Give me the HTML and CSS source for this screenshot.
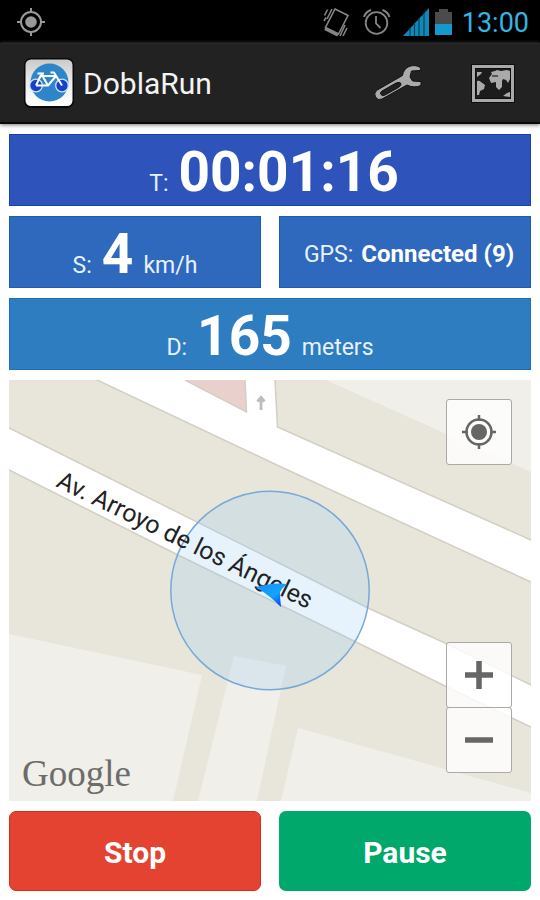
FILE: index.html
```html
<!DOCTYPE html>
<html lang="en">
<head>
<meta charset="utf-8">
<meta name="viewport" content="width=device-width, initial-scale=1">
<title>DoblaRun</title>
<link rel="stylesheet" href="styles.css">
</head>
<body>
<div class="status">
  <svg class="status-gps" width="28" height="28" viewBox="0 0 28 28" fill="none" stroke="#999" stroke-width="2"><circle cx="14" cy="14" r="10"/><circle cx="14" cy="14" r="5.8" fill="#999" stroke="none"/><path d="M14 0v5M14 23v5M0 14h5M23 14h5"/></svg>
  <div class="status-right">
    <svg class="vibrate" width="26" height="30" viewBox="323 7 26 30" fill="none" stroke="#858585" stroke-width="1.6"><path d="M335 9l13 6.500-9.500 18.500-13-6.500z"/><path d="M325 28.500l13 6.500" stroke-width="3.500"/><path d="M324.500 15.500l3-6M327 19l5-10M324 21l2-3.500M340 36l5-11M343 36l4-8"/></svg>
    <svg width="28" height="28" viewBox="363 8 28 28" fill="none" stroke="#858585" stroke-width="1.8"><circle cx="376.500" cy="23" r="10.800"/><path d="M376 16v7.500l4.500 4.500"/><path d="M364 17q1.500-5 7-7M389.500 17q-1.500-5-7-7" stroke-width="2"/></svg>
    <svg class="signal" width="26" height="28" viewBox="403 7 26 28"><path d="M403 35l26-28v28z" fill="#1288b8"/><path d="M410 27v8M414.500 22v13M419 17v18M424 12v23" stroke="#06425c" stroke-width="1.200"/></svg>
    <svg class="battery" width="17" height="26" viewBox="435 8 17 26"><path d="M439 8h9v3h4v12h-17V11h4z" fill="#4b4b4b"/><path d="M435 23h17v11h-17z" fill="#1399cb"/></svg>
    <time class="clock">13:00</time>
  </div>
</div>
<header class="bar">
  <svg class="logo" width="50" height="50" viewBox="24 59 50 50" aria-hidden="true">
    <defs><linearGradient id="tile" x1="0" y1="0" x2="0" y2="1"><stop offset="0" stop-color="#cacaca"/><stop offset=".5" stop-color="#ededed"/><stop offset="1" stop-color="#fff"/></linearGradient></defs>
    <rect x="24" y="59" width="50" height="50" rx="7" fill="#090909"/>
    <rect x="25.500" y="60.500" width="47" height="46.500" rx="5.500" fill="url(#tile)"/>
    <circle cx="49.500" cy="83.500" r="19" fill="#2e86c8"/>
    <circle cx="36" cy="86.500" r="6.300" fill="#1742c8" stroke="#cfe4fa" stroke-width="1.300"/><circle cx="62" cy="86.500" r="6.300" fill="#1742c8" stroke="#cfe4fa" stroke-width="1.300"/>
    <path d="M36 86.500l4.500-9.500h15.500l-8 9.500H36M48 86.500l-7-12M37.500 74.500h6.500M62 86.500l-8-13h-3.500" fill="none" stroke="#fff" stroke-width="2" stroke-linejoin="round"/>
  </svg>
  <h1 class="title">DoblaRun</h1>
  <button class="action" type="button" aria-label="Settings">
    <svg width="50" height="38" viewBox="374 65 50 38"><path d="M422 69q-5.500-4-12-1.500-5.500 2.500-6.500 9L377.500 91.500q-3 3-1 6.500 2.500 4 6.500 2L408 86q7 3.500 14 .5v-4l-8.500-.5-2.500-4 1.500-6 8.500-.500z" fill="#aaa" stroke="#111" stroke-width="1"/><path d="M382 95.500q-1.500-2 1-3.500l14-8q3.500-1.500 5 .5.500 2-2.500 4L386 96q-3 1.500-4-.5z" fill="#202020" stroke="#111" stroke-width="1"/></svg>
  </button>
  <button class="action" type="button" aria-label="World map">
    <svg width="44" height="39" viewBox="471 65 44 39"><rect x="473.500" y="67.500" width="39" height="34" fill="#1c1c1c" stroke="#0d0d0d" stroke-width="5"/><rect x="473.500" y="67.500" width="39" height="34" fill="none" stroke="#a9a9a9" stroke-width="3"/><path d="M477 73h5l-1 2-4 3zM477 82q2-1 4 1l4 3-1 4-4 2-1 4h-2zM491 73l4-1 2-1 4 1 6-1 3 1v8l-2 4-2-3-3-1-1 2v6l-3 3-3-3v-5l-5 1-2-5 3-4zM503 97l4-3 3-1v5z" fill="#aaa"/><path d="M492 77h6" stroke="#202020" stroke-width="1.200"/></svg>
  </button>
</header>
<main class="content">
  <section class="tile tile-time"><span class="unit">T:</span><strong class="figure">00:01:16</strong></section>
  <div class="pair">
    <section class="tile tile-speed"><span class="unit">S:</span><strong class="figure">4</strong><span class="unit">km/h</span></section>
    <section class="tile tile-gps"><span class="unit">GPS:</span><strong class="state">Connected (9)</strong></section>
  </div>
  <section class="tile tile-distance"><span class="unit">D:</span><strong class="figure">165</strong><span class="unit">meters</span></section>
  <section class="map" aria-label="Map">
    <svg class="canvas" viewBox="9 380 522 421" preserveAspectRatio="xMidYMid slice">
      <defs><linearGradient id="arrow" x1="0" y1="0" x2="1" y2="1"><stop offset="0" stop-color="#168cff"/><stop offset=".55" stop-color="#16a3ff"/><stop offset="1" stop-color="#0018f0"/></linearGradient></defs>
      <path d="M9 380h522v421H9z" fill="#e8e6db"/>
      <g fill="#f0efea"><path d="M326 380h205v92zM9 634l193 41-29 126H9zM234 656l52 10-29 135h-59zM298 728l233 65v8H281z"/></g>
      <path d="M97 380L280 466.500 531 582v-42L277.500 427 275 380z" fill="#fff"/>
      <path d="M185 380h60l1.500 32z" fill="#e9d0cc"/>
      <path d="M9 428L280 563.500 368 608l77 35 86 42v42l-84-40-92-45.500L182 557 9 470z" fill="#fff"/>
      <g fill="none" stroke="#d2cfc5" stroke-width="1.500"><path d="M95 379L280 466.500 531 582M275 380l2.500 47L531 540M185 380l61.500 32-1.500-32M9 428L280 563.500 368 608l77 35 86 42M9 470l173 87 173 84.500 92 45.500 84 40"/></g>
      <path d="M261 410v-12M257.500 401.500l3.500-4 3.500 4" fill="none" stroke="#b9bcc0" stroke-width="2.800"/>
      <circle cx="270" cy="590.500" r="99.200" fill="#8fc8f5" fill-opacity=".22" stroke="#77a8d8" stroke-width="1.500"/>
      <text class="street" transform="translate(55 486) rotate(26)">Av. Arroyo de los Ángeles</text>
      <path d="M256 587q17-5 31-3-5 4-7 8 0 7 1 15-11-11-25-20z" fill="url(#arrow)"/>
    </svg>
    <span class="brand">Google</span>
    <button class="control locate" type="button" aria-label="My location"><svg width="34" height="34" viewBox="0 0 34 34" fill="none" stroke="#666" stroke-width="2.500"><circle cx="17" cy="17" r="12.500"/><circle cx="17" cy="17" r="8" fill="#666" stroke="none"/><path d="M17 0v6M17 28v6M0 17h6M28 17h6"/></svg></button>
    <div class="zoom">
      <button class="control" type="button" aria-label="Zoom in"><svg width="28" height="28" viewBox="0 0 28 28"><path d="M0 14h28M14 0v28" stroke="#666" stroke-width="5.500"/></svg></button>
      <button class="control" type="button" aria-label="Zoom out"><svg width="28" height="28" viewBox="0 0 28 28"><path d="M0 14h28" stroke="#666" stroke-width="5.500"/></svg></button>
    </div>
  </section>
  <div class="pair">
    <button class="command stop" type="button">Stop</button>
    <button class="command pause" type="button">Pause</button>
  </div>
</main>
</body>
</html>
```
FILE: styles.css
```css
* {
  box-sizing: border-box;
}

body {
  display: flex;
  flex-direction: column;
  min-height: 100vh;
  margin: 0;
  background: #fff;
  font-family: Roboto, "Liberation Sans", sans-serif;
}

svg {
  display: block;
}

button {
  padding: 0;
  border: 0;
  font: inherit;
  cursor: pointer;
}

.status {
  display: flex;
  align-items: center;
  justify-content: space-between;
  height: 43px;
  padding: 0 11px 0 17px;
  background: #000;
}

.status-right {
  display: flex;
  align-items: center;
  gap: 10px;
}

.vibrate {
  margin-right: 4px;
}

.signal {
  margin-left: 2px;
}

.battery {
  margin-left: -4px;
}

.clock {
  padding-top: 2px;
  color: #33b5e5;
  font-size: 27px;
  line-height: 40px;
}

.bar {
  display: flex;
  align-items: center;
  height: 81px;
  padding: 0 25px 0 24px;
  border-top: 1px solid #292929;
  border-bottom: 2px solid #090909;
  background: #222;
  box-shadow: 0 1px 4px #777;
}

.title {
  flex: 1;
  margin: 0 0 0 9px;
  padding-top: 2px;
  color: #f3f3f3;
  font-size: 30px;
  font-weight: 400;
  line-height: 36px;
}

.action {
  margin-left: 48px;
  background: none;
}

.content {
  display: flex;
  flex: 1;
  flex-direction: column;
  gap: 10px;
  padding: 10px 9px 9px;
}

.pair {
  display: grid;
  grid-template-columns: 1fr 1fr;
  gap: 18px;
}

.tile {
  display: flex;
  align-items: baseline;
  justify-content: center;
  gap: 10px;
  height: 72px;
  color: #fff;
  line-height: 74px;
  white-space: nowrap;
}

.tile-time {
  padding-left: 8px;
  border: 1px solid #1841b5;
  background: #2e54bc;
}

.tile-speed,
.tile-gps {
  border: 1px solid #1b5cb6;
  background: #2f69be;
}

.tile-gps {
  gap: 8px;
  padding-left: 8px;
}

.tile-distance {
  border: 1px solid #1b70b6;
  background: #2f7dc1;
}

.figure {
  font-size: 55px;
  font-weight: 700;
}

.unit {
  color: #e8f2ff;
  font-size: 23px;
}

.state {
  font-size: 24px;
  font-weight: 700;
}

.map {
  position: relative;
  display: flex;
  flex: 1;
  min-height: 320px;
  overflow: hidden;
}

.canvas {
  position: absolute;
  width: 100%;
  height: 100%;
}

.street {
  fill: #222;
  font-size: 25px;
}

.brand {
  position: absolute;
  bottom: 5px;
  left: 13px;
  color: #6c6c68;
  font-family: "Liberation Serif", serif;
  font-size: 37px;
  line-height: 44px;
}

.control {
  display: grid;
  place-items: center;
  width: 66px;
  height: 66px;
  border: 1px solid #aaa9a5;
  border-radius: 3px;
  background: rgb(255 255 255 / 80%);
}

.locate {
  position: absolute;
  top: 19px;
  right: 19px;
}

.zoom {
  position: absolute;
  right: 19px;
  bottom: 28px;
}

.zoom .control + .control {
  margin-top: -1px;
}

.command {
  height: 80px;
  padding-top: 2px;
  border-radius: 7px;
  color: #fff;
  font-size: 30px;
  font-weight: 700;
}

.stop {
  border: 1px solid #d92b20;
  background: #e44332;
}

.pause {
  background: #00a86b;
}
```
